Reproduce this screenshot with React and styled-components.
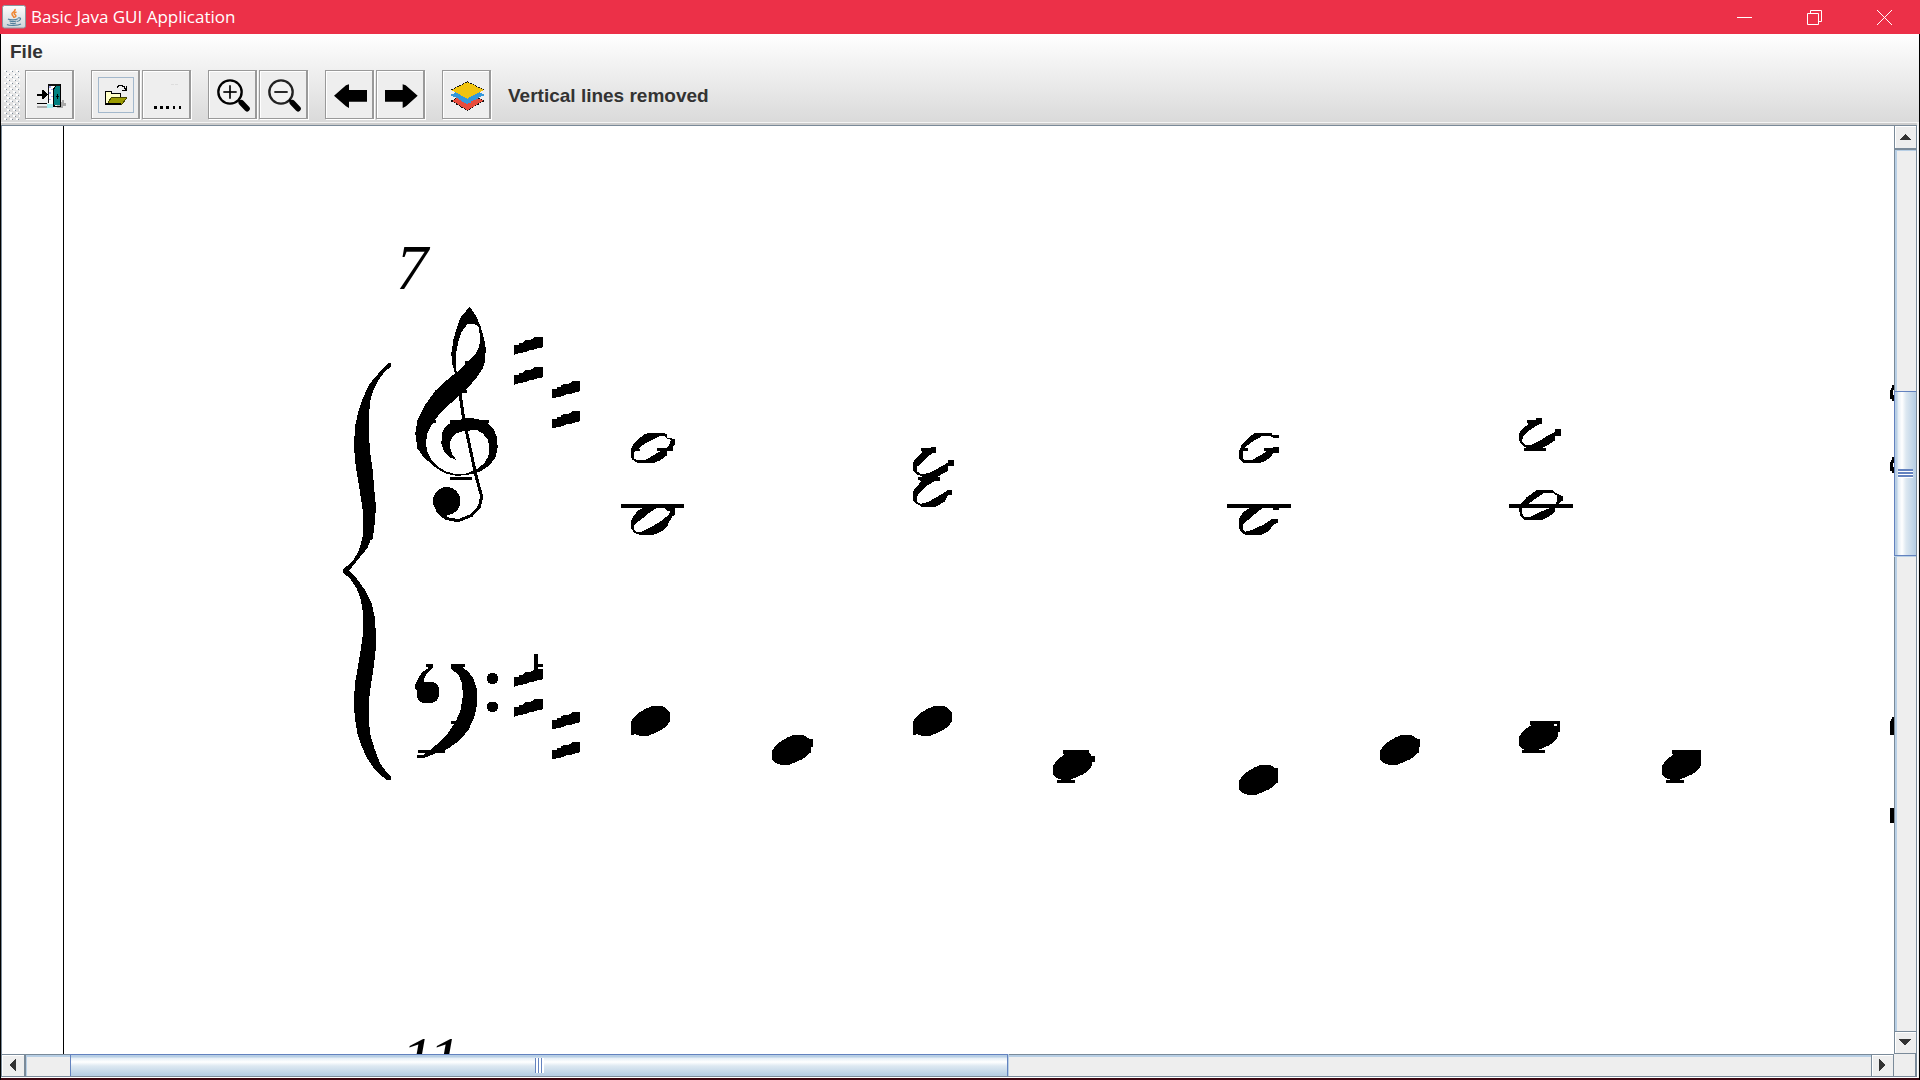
import React from "react";
import styled, { createGlobalStyle } from "styled-components";

const LINE = "#7a8a99";
const PALE = "#b8cfe5";
const BLUE = "#6382bf";

const GlobalStyle = createGlobalStyle`
  * { box-sizing: border-box; }
  body { margin: 0; overflow: hidden; }
  button { padding: 0; margin: 0; border: 0; font: inherit; color: inherit; }
  svg { display: block; }
`;

const Window = styled.div`
  height: 100vh;
  display: flex;
  flex-direction: column;
  background: #000;
  color: #333;
  font: bold 19px/20px "Liberation Sans", Arial, sans-serif;
`;

const TitleBar = styled.header`
  height: 34px;
  flex: none;
  display: flex;
  align-items: center;
  padding: 0 1px 0 2px;
  background: #ec3048;
  color: #fff;
`;

const Title = styled.h1`
  flex: 1;
  margin: 0 0 0 5px;
  font: 400 17px/20px "Open Sans", "Noto Sans", sans-serif;
`;

const WindowButton = styled.button`
  width: 70px;
  height: 34px;
  display: flex;
  align-items: center;
  justify-content: center;
  background: transparent;
`;

const Frame = styled.div`
  flex: 1;
  min-height: 0;
  display: flex;
  flex-direction: column;
  margin: 0 1px;
  background: #eee;
  border-bottom: 2px solid #3c0610;
`;

const Bars = styled.div`
  flex: none;
  background: linear-gradient(#fff, #dadada);
  border-bottom: 1px solid #f4f4f4;
`;

const MenuBar = styled.nav`
  height: 36px;
  display: flex;
  align-items: center;
  padding-left: 9px;
`;

const MenuButton = styled.button`
  background: transparent;
`;

const ToolBar = styled.div`
  height: 52px;
  display: flex;
  align-items: flex-start;
`;

const Grip = styled.div`
  width: 16px;
  height: 51px;
  margin: 0 5px 0 3px;
`;

const ToolGroup = styled.div`
  display: flex;
  gap: 2px;
  margin-right: 17px;
`;

const ToolButton = styled.button`
  width: 49px;
  height: 49px;
  background: #eee;
  border: 1px solid #999;
  border-right-width: 2px;
  box-shadow: 1px 1px #fff, inset 1px 1px #fff;
`;

const Status = styled.output`
  line-height: 52px;
`;

const ScrollPane = styled.main`
  flex: 1;
  min-height: 0;
  display: grid;
  grid-template-columns: minmax(0, 1fr) 23px;
  grid-template-rows: minmax(0, 1fr) 23px;
  margin: 2px 2px 1px 0;
  border-top: 1px solid ${LINE};
  border-left: 1px solid ${LINE};
  box-shadow: 0 -2px #ccc, 1px 1px #fff;
`;

const Viewport = styled.div`
  overflow: hidden;
  background: #fff;
`;

const ScrollBar = styled.div`
  display: flex;
  flex-direction: ${(p) => (p.$vertical ? "column" : "row")};
  border: 0 solid ${LINE};
  border-width: ${(p) => (p.$vertical ? "0 1px 0 1px" : "1px 0 1px 0")};
`;

const ArrowButton = styled.button`
  flex: none;
  width: ${(p) => (p.$vertical ? "auto" : "22px")};
  height: ${(p) => (p.$vertical ? "22px" : "auto")};
  display: flex;
  align-items: center;
  justify-content: center;
  padding: 0 1px 1px 0;
  background: #eee;
  border: 0 solid ${LINE};
  border-width: ${(p) => (!p.$end ? "0" : p.$vertical ? "0 0 1px" : "0 1px 0 0")};
  box-shadow: inset 1px 1px #fff;
`;

const Track = styled.div`
  flex: 1;
  display: flex;
  flex-direction: ${(p) => (p.$vertical ? "column" : "row")};
  background: #eee;
  border: 0 solid ${LINE};
  border-width: ${(p) => (p.$vertical ? "2px 0 1px 0" : "0 1px 0 2px")};
  box-shadow: inset ${(p) => (p.$vertical ? "2px 1px" : "1px 2px")} ${PALE};
`;

const Space = styled.div`
  flex: ${(p) => p.$size} 0 0;
`;

const Thumb = styled.div`
  flex: ${(p) => p.$size} 0 0;
  display: flex;
  align-items: center;
  justify-content: center;
  background: linear-gradient(
    ${(p) => (p.$vertical ? "to right" : "to bottom")},
    ${PALE} 0 2px, #e4edf5 3px, #fff 7px, #dde8f1 11px, ${PALE} 20px
  );
  border: 1px solid ${BLUE};
  ${(p) => (p.$vertical ? "border-right: 0; margin-left: -1px" : "border-bottom: 0; margin-top: -1px")};
  box-shadow: ${(p) => (p.$vertical ? "0 1px" : "1px 0")} ${PALE};
`;

const Ridges = styled.div`
  width: ${(p) => (p.$vertical ? "15px" : "9px")};
  height: ${(p) => (p.$vertical ? "9px" : "15px")};
  background: repeating-linear-gradient(
    ${(p) => (p.$vertical ? "to bottom" : "to right")},
    ${BLUE} 0 ${(p) => (p.$vertical ? "2px" : "1px")},
    #fff ${(p) => (p.$vertical ? "2px" : "1px")} 3px
  );
`;

const Corner = styled.div`
  border: 1px solid ${LINE};
  border-width: 0 2px 1px 0;
`;

function ToolIcon({ box, children }) {
  return (
    <svg width="46" height="47" viewBox={box} aria-hidden="true" shapeRendering="crispEdges">
      {children}
    </svg>
  );
}

const GripDots = () => (
  <svg width="16" height="51" shapeRendering="crispEdges" aria-hidden="true">
    <defs>
      <pattern id="bumps" width="6" height="6" patternUnits="userSpaceOnUse">
        <path d="M0 0h2v2h-2zM3 3h2v2h-2z" fill="#fff" />
        <path d="M2 1h1v1h-1zM5 4h1v1h-1z" fill={LINE} />
      </pattern>
    </defs>
    <rect width="16" height="51" fill="url(#bumps)" />
  </svg>
);

const JavaLogo = () => (
  <svg width="24" height="24" viewBox="0 0 24 24" aria-hidden="true">
    <defs>
      <linearGradient id="tile" x2="0" y2="1">
        <stop stopColor="#fdfdfd" />
        <stop offset="1" stopColor="#cfd5d9" />
      </linearGradient>
    </defs>
    <rect x=".5" y=".5" width="23" height="22.5" rx="2" fill="url(#tile)" stroke="#8b979e" />
    <path d="M13 4c1 3-4 3-3 5 0 2 2 2 2 4M14.5 7c-3 1-3 2-1 3 1 1 0 2-1 2" fill="none" stroke="#ee8631" strokeWidth="1.5" />
    <path d="M6 14c2 1.2 8 1 10-.2M16 13c4-1 3 3-1 3.5M7.5 16c2 .8 5 .7 7 0M8 18c2 .8 4 .7 6 0M5 19.5c2 1.5 11 1.2 14-.5" fill="none" stroke="#53809c" strokeWidth="1.2" />
  </svg>
);

const ExitIcon = () => (
  <ToolIcon box="78 213 138 141">
    <path d="M111 317h30v6h-30zM171 305h15v-6h6v9h5v9h-7v6h-19z" fill="#aaa" />
    <path d="M141 311h18v12h-18z" fill="#a5eef0" />
    <path d="M144 253h38v4h-38zM144 253h3v57h-3z" fill="#111" />
    <path d="M147 257h14v54h-14z" fill="#fff" />
    <path d="M148 259h4v4h-4zM154 267h4v4h-4zM148 277h4v4h-4zM154 287h4v4h-4zM148 297h4v4h-4z" fill="#aaaaf0" />
    <path d="M160 265l6-7h16v57h-16l-7 8z" fill="#008080" />
    <path d="M159 265l7-8h3l-6 10v46l3 4h16v4h-23zM180 253h3v68h-3zM168 287h8v4h-8zM171 283h4v13h-4z" fill="#000" />
    <path d="M111 281h15v-11h5l13 13-13 13h-5v-9h-15zM111 309h30v4h-30z" fill="#000" />
  </ToolIcon>
);

const OpenIcon = () => (
  <ToolIcon box="276 213 138 141">
    <rect x="295" y="232" width="106" height="106" fill="none" stroke="#a3b8cc" strokeWidth="3" />
    <path d="M317 274h18v6h26v14h-24l-12 19h-8z" fill="#ffffc8" stroke="#000" strokeWidth="3" />
    <path d="M334 292h47l-16 22h-44z" fill="#9a9a00" stroke="#444400" strokeWidth="3" />
    <path d="M316 312h46" stroke="#000" strokeWidth="4" />
    <path d="M351 263v-4h4v-3h13v4h5v4h4v5M380 258v13h-13" fill="none" stroke="#000" strokeWidth="3" />
  </ToolIcon>
);

const DotsIcon = () => (
  <ToolIcon box="429 213 138 141">
    <path d="M512 253h9M525 253h9" stroke="#ddd" strokeWidth="3" />
    <path d="M462 323h83" stroke="#000" strokeWidth="8" strokeDasharray="8 10.5" />
  </ToolIcon>
);

const ZoomIcon = ({ zoomIn }) => (
  <svg width="46" height="47" viewBox="627 213 138 141" aria-hidden="true">
    <circle cx="690" cy="276" r="35" fill="#f2f2f2" stroke={zoomIn ? "#000" : "#222"} strokeWidth="7" />
    <path d="M670 276h40" stroke="#000" strokeWidth="5" />
    {zoomIn && <path d="M690 256v40" stroke="#000" strokeWidth="5" />}
    <path d="M714 299l10 8" stroke="#000" strokeWidth="8" />
    <path d="M724 308l17 18" stroke="#000" strokeWidth="17" strokeLinecap="round" />
  </svg>
);

const ArrowIcon = ({ right }) => (
  <svg width="46" height="47" viewBox="78 33 138 141" aria-hidden="true">
    <path d={right ? "M102 90h53V73l9 3 36 31-35 32-10 5v-19h-53z" : "M201 90h-54V73l-9 3-36 31 36 32 9 5v-19h54z"} fill="#000" />
  </svg>
);

const LayersIcon = () => (
  <ToolIcon box="429 33 138 141">
    <g stroke="#111" strokeWidth="3" strokeDasharray="6 3">
      <path d="M454 123l48-25 49 25-49 28z" fill="#e74c3c" />
      <path d="M454 105l48-25 49 25-49 26z" fill="#3498db" stroke="#3498db" />
      <path d="M454 90l48-25 49 25-49 26z" fill="#f1c40f" stroke="none" />
      <path d="M454 90l48-25 49 25" fill="none" />
    </g>
  </ToolIcon>
);

const SHARP_BAR = "M0 25H15V19L28 17 30 12 38 9H48L56 6 62 0H86V31L74 33 60 38 45 40 35 45 22 48 10 50 0 53Z";
const NOTE_HEAD = "M0 48L8 36 25 20 45 8 65 0 95 0 104 6 112 12 118 20 118 46 108 60 90 73 68 83 50 90 28 90 12 84 0 74Z";

const Bar = ({ x, y }) => <path transform={`translate(${x} ${y})`} d={SHARP_BAR} />;
const Head = ({ x, y, extra }) => (
  <g fillRule="nonzero">
    <path transform={`translate(${x} ${y})`} d={NOTE_HEAD} />
    {extra && <path d={extra} />}
  </g>
);

// Each group is drawn on a grid of thirds of a pixel.
const third = (x, y) => `translate(${x} ${y}) scale(0.33333)`;

const SheetMusic = () => (
  <svg width="1892" height="928" viewBox="2 126 1892 928" shapeRendering="crispEdges" role="img" aria-label="Sheet music" fillRule="evenodd">
    <path d="M63 126h1v928h-1z" />
    <g fontFamily="'Liberation Serif', serif" fontStyle="italic" fontWeight="400" fontSize="64">
      <text x="396" y="289">7</text>
      <text x="401" y="1081">11</text>
    </g>

    <g transform={third(330, 230)}>
      <path d="M182 400H175L150 425 120 460 98 505 85 545 75 590 72 650 76 700 84 750 92 800 97 830 100 870 98 920 92 945 85 965 70 990 55 1005 39 1018V1028L60 1045 80 1075 93 1110 99 1150V1210L92 1260 84 1310 75 1360 72 1410 74 1460 82 1510 95 1550 112 1585 135 1620 160 1642 172 1651H182V1638L170 1627 150 1600 135 1560 122 1520 117 1480V1410L122 1370 130 1320 137 1260 137 1200 134 1160 125 1120 105 1080 80 1045 57 1022 75 1000 95 975 112 955 122 930 128 928 134 880 138 830 134 790 128 720 122 680 117 620V560L120 515 130 480 145 450 165 425 182 410Z" />
      <path d="M420 231L438 258 452 290 462 325 467 355 466 390 458 415 440 442 415 472 390 495 362 520 330 550 308 580 292 610 288 640 292 665 305 690 325 712 350 725 375 732 405 732 440 718 462 700 475 680 478 655 474 630 460 612 440 600 400 603 375 612 362 630 360 650 366 672 380 690 360 682 342 665 334 640 336 610 345 592 362 578 390 570 405 564 440 566 470 577 490 595 500 620 503 650 498 680 480 705 455 722 430 732 380 738 345 730 310 708 280 680 262 655 256 610 262 570 282 530 310 490 345 455 375 430 366 400 364 370 370 330 378 300 392 262 408 243ZM412 283L395 305 385 335 378 370 377 400 380 428 405 405 418 392 438 370 448 350 450 320 446 290 430 281Z" />
      <path d="M316 480h96v9h-96zM360 570h116v9h-116zM300 570h18v9h-18zM405 393h20v9h-20zM360 740h66v9h-66z" />
      <path d="M390 490L400 560 415 630 430 700 440 745 455 800 448 830 425 856 385 872 350 866 330 852" fill="none" stroke="#000" strokeWidth="9" />
      <ellipse cx="350" cy="813" rx="41" ry="42" />
      <path d="M309 812h15l30 50h-15l-20-15z" />
      <Bar x={552} y={321} />
      <Bar x={552} y={411} />
      <Bar x={665} y={453} />
      <Bar x={665} y={543} />
    </g>

    <g transform={third(330, 540)}>
      <rect x="260" y="425" width="67" height="64" rx="24" />
      <path d="M289 372H308V385L290 402 282 418 278 440 268 450 256 448V434L262 420 275 398 295 384 289 380Z" />
      <path d="M363 372H404V382H398L415 395 430 415 440 445V500L432 535 415 570 390 600 360 622 344 630V638H320L305 645 280 655H262V645H280L290 638H264V630H300L330 605 355 578 372 552H363V543H378L392 510 398 470 397 430 385 405 363 385Z" />
      <rect x="471" y="399" width="33" height="33" rx="14" />
      <rect x="471" y="485" width="33" height="31" rx="14" />
      <path d="M612 342h12v50h-12zM624 372h14v9h-14z" />
      <Bar x={552} y={387} />
      <Bar x={552} y={477} />
      <Bar x={665} y={516} />
      <Bar x={665} y={606} />
    </g>

    <g transform={third(610, 400)}>
      <path d="M62 148L72 130 87 116 102 104 117 98H162L171 104V113L183 115 195 118V132L188 140V152H171V166L152 180 132 189H82L67 179 62 170ZM71 175L82 181H105L130 166 150 154H141V144H171L180 130 183 119 172 116 165 108H150L120 123 96 136 86 145 90 147V154H74Z" />
      <path d="M33 312h189v12h-27v21l-7 3-10 17-8 17-10 10-30 13H90L75 400 62 385V365l8-15 15-20 15-6H33zM72 375V388L80 395H96L132 376 158 360 175 345 182 332H172L165 324H140L118 338 94 358Z" />
      <path d="M933 144H962V141H978V158H970L952 170 938 185 922 200V215L932 222 954 220 984 205 1014 188V180H1032V197H1014V212L990 226 978 232H990V243H974L950 258 932 275 920 290V305L932 312 954 306 980 291 1000 280 1014 270H1026V286H1014L1005 304 978 320H935L918 310 909 300V275L918 262 935 243 924 240V231H940L918 222 909 212V188L918 175 930 162 940 156 933 153Z" />
    </g>

    <g transform={third(1210, 400)}>
      <path d="M136 98H186V106H207V114H190L180 107 155 109 125 126 105 142V144H114V153H98V175L103 180H126L154 164 170 154 162 153V144H190V141H207V158H192L180 172 165 184 150 189H100L88 178 86 155 95 135 118 110Z" />
      <path d="M51 312H243V324H207V330H190V324H158L125 350 98 375V388L105 396 130 388 160 374 186 357H204V368L190 375 175 395 152 405H110L98 400 86 385 88 355 98 338 118 324H51Z" />
      <path d="M951 60H978V54H996V70L980 77 960 90 940 108 936 125 945 135 965 134 995 119 1018 104 1036 95V87H1053V107H1036L1034 122 1015 134 998 144H1008V153H942V144H950L935 134 927 120V100L938 85 957 72 951 69Z" />
      <path d="M980 270H1026L1034 278 1058 288V302L1050 306 1045 320 1034 325V335L1020 348 995 360H945L930 348 927 325 935 308 950 292ZM1000 280L978 295 958 310 936 325V340L942 352H960L985 338 1015 326 1034 316 1042 300V288L1030 280Z" />
      <path d="M897 312h192v12h-192z" />
    </g>

    <g transform={third(610, 690)}>
      <Head x={62} y={48} extra="M62 110h10v24h-10z" />
      <Head x={486} y={135} extra="M590 147h19v24h-19zM590 180h13v9h-13z" />
      <Head x={908} y={48} extra="M908 110h10v24h-10z" />
      <Head x={1329} y={180} extra="M1359 180h78v40h-30l-48-28zM1420 198h35v18h-35zM1341 270h54v9h-54zM1356 262h27v12h-27z" />
    </g>

    <g transform={third(1210, 690)}>
      <Head x={87} y={225} extra="M186 234h18v26h-18zM186 270h18v9h-18z" />
      <Head x={510} y={135} extra="M612 147h18v24h-18zM612 180h15v9h-15z" />
      <Head x={927} y={93} extra="M960 93h90v32h-40l-50-20zM936 180h69v9h-69z" />
      <path d="M1032 102h9v6h-9z" fill="#fff" />
      <Head x={1356} y={180} extra="M1386 180h87v37h-40l-47-25zM1368 270h54v9h-54zM1383 262h27v12h-27z" />
    </g>

    <g transform={third(1860, 370)}>
      <path d="M102 45H96V54H93V60H90V88H96V92H102V75H99V60H102ZM102 261H96V270H93V276H90V304H96V310H102V291H99V280H102ZM102 1041H96V1047H93V1053H90V1095H102ZM90 1314H102V1359H90Z" />
    </g>
  </svg>
);

const ARROWS = {
  up: ["12", "6", "M6 0l6 6H0z"],
  down: ["14", "6", "M7 6L0 0h14z"],
  left: ["6", "14", "M0 7l6-7v14z"],
  right: ["6", "14", "M6 7L0 0v14z"],
};

function Arrow({ dir }) {
  const [w, h, d] = ARROWS[dir];
  return (
    <ArrowButton
      type="button"
      aria-label={`Scroll ${dir}`}
      $vertical={dir === "up" || dir === "down"}
      $end={dir === "down" || dir === "right"}
    >
      <svg width={w} height={h} shapeRendering="crispEdges" fill="#333">
        <path d={d} />
      </svg>
    </ArrowButton>
  );
}

function Scroller({ vertical, before, size, after }) {
  return (
    <ScrollBar $vertical={vertical}>
      <Arrow dir={vertical ? "up" : "left"} />
      <Track $vertical={vertical}>
        <Space $size={before} />
        <Thumb $vertical={vertical} $size={size}>
          <Ridges $vertical={vertical} />
        </Thumb>
        <Space $size={after} />
      </Track>
      <Arrow dir={vertical ? "down" : "right"} />
    </ScrollBar>
  );
}

const TOOLS = [
  [["Exit", <ExitIcon />]],
  [["Open", <OpenIcon />], ["More", <DotsIcon />]],
  [["Zoom in", <ZoomIcon zoomIn />], ["Zoom out", <ZoomIcon />]],
  [["Previous", <ArrowIcon />], ["Next", <ArrowIcon right />]],
  [["Layers", <LayersIcon />]],
];

export default function App() {
  return (
    <Window>
      <GlobalStyle />
      <TitleBar>
        <JavaLogo />
        <Title>Basic Java GUI Application</Title>
        <WindowButton type="button" aria-label="Minimize">
          <svg width="15" height="15"><path d="M0 7h15v1H0z" fill="#fff" /></svg>
        </WindowButton>
        <WindowButton type="button" aria-label="Restore">
          <svg width="15" height="15" fill="none" stroke="#fff"><path d="M.5 3.5h11v11H.5zM3.5 3.5v-3h11v11h-3" /></svg>
        </WindowButton>
        <WindowButton type="button" aria-label="Close">
          <svg width="15" height="15" stroke="#fff"><path d="M0 0l15 15M15 0L0 15" /></svg>
        </WindowButton>
      </TitleBar>
      <Frame>
        <Bars>
          <MenuBar>
            <MenuButton type="button">File</MenuButton>
          </MenuBar>
          <ToolBar role="toolbar">
            <Grip><GripDots /></Grip>
            {TOOLS.map((group, i) => (
              <ToolGroup key={i}>
                {group.map(([name, icon]) => (
                  <ToolButton key={name} type="button" aria-label={name}>{icon}</ToolButton>
                ))}
              </ToolGroup>
            ))}
            <Status>Vertical lines removed</Status>
          </ToolBar>
        </Bars>
        <ScrollPane>
          <Viewport><SheetMusic /></Viewport>
          <Scroller vertical before={241} size={163} after={475} />
          <Scroller before={44} size={936} after={863} />
          <Corner />
        </ScrollPane>
      </Frame>
    </Window>
  );
}
